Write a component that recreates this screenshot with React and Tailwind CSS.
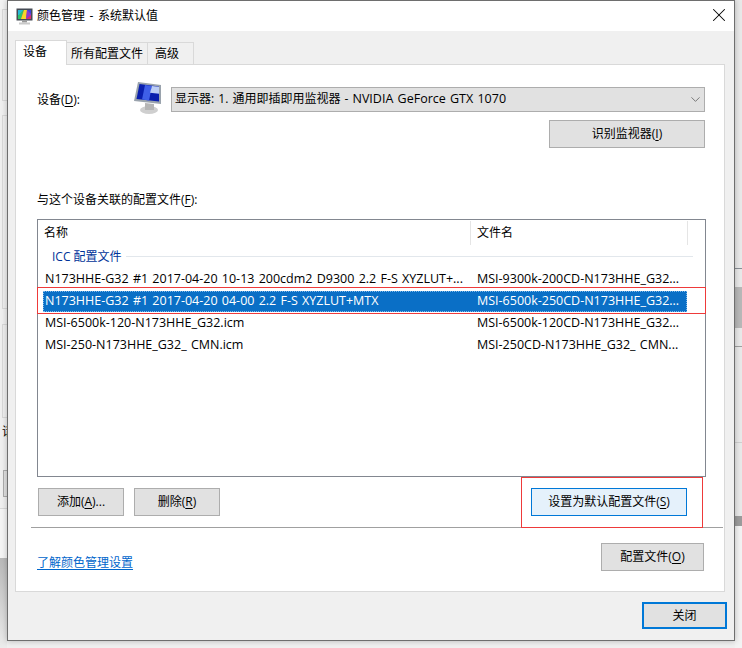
import React from "react";
import { ChevronDown, X } from "lucide-react";

const Key = ({ children }) => <span className="underline underline-offset-2">{children}</span>;

const Btn = ({ className = "", children }) => (
  <button className={`h-[28px] border border-[#adadad] bg-[#e1e1e1] text-[12px] text-black flex items-center justify-center ${className}`}>
    {children}
  </button>
);

const Row = ({ name, file, selected }) => (
  <div className={`h-[22px] flex items-center whitespace-nowrap text-[12.5px] [word-spacing:1px] ${selected ? "text-white" : "text-black"}`}>
    <div className={`w-[644px] h-[21px] flex items-center ml-[5px] ${selected ? "bg-[#0a6fc6] outline-1 outline-dotted -outline-offset-1 outline-[#7fb9e9]" : ""}`}>
      <span className="w-[434px] pl-[2px] overflow-hidden">{name}</span>
      <span>{file}</span>
    </div>
  </div>
);

const MonitorSmall = () => (
  <svg width="17" height="17" viewBox="0 0 17 17">
    <rect x="0.500" y="0.500" width="16" height="12" fill="#454b54" />
    <rect x="2" y="2" width="13" height="9" fill="#d92f6e" />
    <path d="M2 2h6L5 11H2z" fill="#2ec26a" />
    <path d="M2 2h5L3 7H2z" fill="#27b9d8" />
    <path d="M8 2h3l-1 9H5z" fill="#f5d829" />
    <path d="M11 2h4v5l-5 4z" fill="#8a3ad0" />
    <path d="M15 2v4l-4-4z" fill="#3a46d8" />
    <rect x="6" y="12.500" width="5" height="2" fill="#9a9a9a" />
    <rect x="3" y="14.500" width="11" height="2" fill="#c9c9c9" />
  </svg>
);

const MonitorLarge = () => (
  <svg width="32" height="34" viewBox="0 0 32 34">
    <ellipse cx="16" cy="29" rx="9" ry="4" fill="#cfcfcf" />
    <path d="M12 22l9 1v6h-9z" fill="#b5b5b5" />
    <path d="M5 1l23 3v19L1 20z" fill="#9aa3ad" />
    <path d="M6.500 3l19.500 2.500v15L3.500 18z" fill="#0a1fae" />
    <path d="M12 4l7 1-3 14.500-7-1z" fill="#3f5fe8" />
    <path d="M19 5l7 .8v7l-9-1z" fill="#bccdf5" />
  </svg>
);

export default function App() {
  return (
    <div className="relative w-[742px] h-[648px] overflow-hidden bg-[#f0f0f0] text-black [font-family:'Open_Sans','Noto_Sans_CJK_SC',sans-serif]">
      {/* window behind the dialog, only its edges show */}
      <div className="absolute left-0 top-0 w-[7px] h-[648px] flex flex-col">
        <div className="h-[9px] bg-[#f3f3f3]" />
        <div className="h-[92px] ml-[2px] border border-r-0 border-[#d9d9d9]" />
        <div className="h-[14px]" />
        <div className="h-[194px] ml-[2px] border border-r-0 border-[#d9d9d9]" />
        <div className="h-[15px]" />
        <div className="h-[94px] ml-[2px] border border-r-0 border-[#d9d9d9]" />
        <div className="h-[52px] pl-[2px] pt-[5px] text-[12px]">请</div>
        <div className="h-[27px] ml-[3px] bg-[#e1e1e1] border border-r-0 border-[#adadad]" />
        <div className="h-[12px] border-b border-[#d9d9d9]" />
        <div className="h-[49px] bg-[#f5f5f5]" />
        <div className="flex-1 bg-gradient-to-b from-[#b9b9b9] to-[#ececec]" />
      </div>
      <div className="absolute right-0 top-0 w-[7px] h-[648px] flex flex-col bg-[#e9e9e9]">
        <div className="h-[268px]" />
        <div className="h-px bg-[#8a8f96]" />
        <div className="h-[18px]" />
        <div className="h-[41px] bg-[#b8b8b8]" />
        <div className="h-[18px]" />
        <div className="h-px bg-[#a0a0a0]" />
        <div className="h-[95px]" />
        <div className="h-px bg-[#d0d0d0]" />
        <div className="h-[73px]" />
        <div className="h-[10px] bg-[#9c9c9c]" />
        <div className="flex-1 bg-[#f3f3f3]" />
      </div>

      {/* dialog */}
      <div className="absolute left-[7px] top-0 w-[728px] h-[641px] bg-[#f0f0f0] border border-[#6e6e6e] shadow-[0_0_6px_rgba(0,0,0,0.25)] flex flex-col">
        <div className="h-[30px] shrink-0 bg-white flex items-center pl-[8px] pr-[4px]">
          <MonitorSmall />
          <span className="ml-[4px] text-[12px] [word-spacing:1.5px]">颜色管理 - 系统默认值</span>
          <X size={22} strokeWidth={1.1} className="ml-auto -mt-[2px]" />
        </div>

        <div className="flex items-end h-[33px] pl-[7px] text-[12px] shrink-0">
          <div className="relative z-10 w-[52px] h-[25px] -mb-px pb-[2px] pl-[7px] bg-white border border-b-0 border-[#d9d9d9] flex items-center">设备</div>
          <div className="w-[81px] h-[22px] border-r border-t border-[#d9d9d9] flex items-center justify-center">所有配置文件</div>
          <div className="w-[46px] h-[22px] pl-[7px] border-r border-t border-[#d9d9d9] flex items-center">高级</div>
        </div>

        <div className="relative ml-[7px] w-[710px] h-[528px] bg-white border border-[#d9d9d9] text-[12px] shrink-0">
          <div className="flex items-start h-[25px] ml-[21px] mt-[22px]">
            <div className="w-[96px] pt-[4px]">设备(<Key>D</Key>):</div>
            <div className="w-[32px] -mt-[6px]">
              <MonitorLarge />
            </div>
            <div className="ml-[6px] w-[534px] h-[25px] bg-[#e1e1e1] border border-[#adadad] flex items-center pl-[3px] pr-[1px] text-[12.5px] [word-spacing:1px]">
              <span>
                <span className="text-[12px]">显示器: 1. 通用即插即用监视器 - </span>
                NVIDIA GeForce GTX 1070
              </span>
              <ChevronDown size={15} strokeWidth={1.2} className="ml-auto text-[#555]" />
            </div>
          </div>
          <div className="flex justify-end mr-[19px] mt-[8px]">
            <Btn className="w-[156px]">识别监视器(<Key>I</Key>)</Btn>
          </div>

          <div className="ml-[21px] mt-[43px] h-[18px] leading-[18px]">与这个设备关联的配置文件(<Key>F</Key>):</div>

          <div className="ml-[21px] mt-[10px] w-[669px] h-[258px] bg-white border border-[#828790]">
            <div className="h-[25px] flex items-center">
              <span className="w-[432px] pl-[6px]">名称</span>
              <span className="border-l border-[#e5e5e5] h-[24px] w-[217px] flex items-center pl-[6px]">文件名</span>
              <span className="border-l border-[#e5e5e5] h-[24px]" />
            </div>
            <div className="h-[23px] flex items-center pl-[14px] text-[#003399]">
              <span>ICC 配置文件</span>
              <span className="ml-[4px] w-[567px] h-px bg-[#e2e7ec]" />
            </div>
            <Row name="N173HHE-G32 #1 2017-04-20 10-13 200cdm2 D9300 2.2 F-S XYZLUT+..." file="MSI-9300k-200CD-N173HHE_G32..." />
            <Row selected name="N173HHE-G32 #1 2017-04-20 04-00 2.2 F-S XYZLUT+MTX" file="MSI-6500k-250CD-N173HHE_G32..." />
            <Row name="MSI-6500k-120-N173HHE_G32.icm" file="MSI-6500k-120CD-N173HHE_G32..." />
            <Row name="MSI-250-N173HHE_G32_ CMN.icm" file="MSI-250CD-N173HHE_G32_ CMN..." />
          </div>

          <div className="flex ml-[22px] mt-[11px]">
            <Btn className="w-[86px]">添加(<Key>A</Key>)...</Btn>
            <Btn className="w-[86px] ml-[10px]">删除(<Key>R</Key>)</Btn>
            <Btn className="w-[156px] ml-[311px] !border-[#0078d7] !bg-[#e5f1fb]">设置为默认配置文件(<Key>S</Key>)</Btn>
          </div>

          <div className="ml-[15px] mt-[11px] w-[692px] h-px bg-[#a0a0a0]" />

          <div className="flex items-start ml-[21px] mt-[15px] mr-[20px] justify-between">
            <a className="mt-[11px] text-[#0066cc] underline underline-offset-2">了解颜色管理设置</a>
            <Btn className="w-[103px]">配置文件(<Key>O</Key>)</Btn>
          </div>

          {/* red annotation boxes */}
          <div className="absolute left-[21px] top-[222px] w-[669px] h-[27px] border border-[#ee3a3a]" />
          <div className="absolute left-[505px] top-[412px] w-[182px] h-[51px] border border-[#ee3a3a]" />
        </div>

        <div className="flex justify-end mt-[10px] mr-[7px]">
          <Btn className="w-[85px] !h-[27px] !border-2 !border-[#0078d7]">关闭</Btn>
        </div>
      </div>
    </div>
  );
}
